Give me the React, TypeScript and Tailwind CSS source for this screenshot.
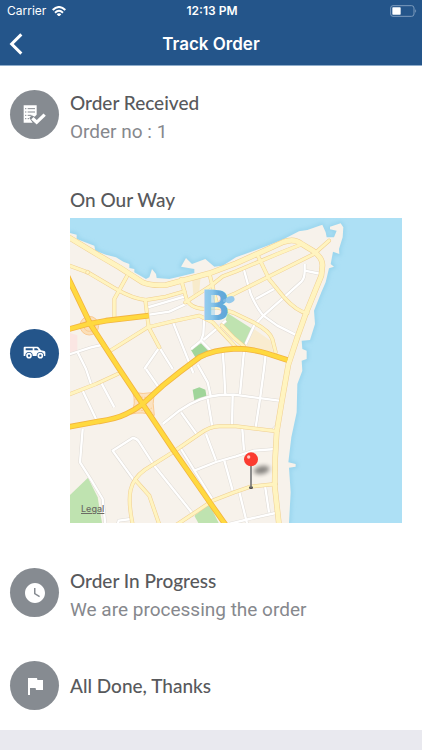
import React from 'react';
import { MdFlag, MdWatchLater } from 'react-icons/md';

const MAJOR_ROADS = [
  'M-12 166 L62 320 L148 453 L218 558 L308 693 L423 858 L470 925',
  'M-5 334 L50 319 L108 308 L236 293',
  'M-5 627 L88 610 Q140 602 168 588 Q195 576 218 558 L278 503 Q330 460 388 418 Q430 395 498 392 Q550 393 590 406 L652 426',
];

const COAST_ROAD =
  'M-5 57 L88 113 L148 148 L218 193 Q245 204 288 201 L418 166 L498 136 L572 103 L640 72 Q672 60 692 76 L730 99 Q760 122 757 145 L754 173 L707 288 L682 358 L655 440 L635 553 L620 643 Q614 720 614 803 L627 920';

const YELLOW_ROADS = [
  'M-5 142 L53 163 L138 213 Q188 242 228 246 L288 236 L343 220',
  'M170 176 L133 243 L133 298',
  'M226 246 L236 328 L268 388',
  'M118 400 L233 328 L308 310 L388 293 L428 313 L498 388',
  'M333 183 L348 238 Q356 270 403 273 L443 268',
  'M346 253 L423 203 L458 175 L498 160 L622 108 L697 78',
  'M418 166 L443 268 L492 285 L550 313 Q600 340 607 363 L617 403',
  'M440 262 Q465 238 492 228 L592 178 L732 108 L777 68',
  'M562 110 L597 183 L642 238 Q680 280 712 286',
  'M455 322 L492 360 L522 385',
  'M-5 530 L78 498 L143 468',
  'M188 920 Q174 850 182 815 Q190 780 225 755 L308 703 L388 648 Q420 625 448 625 L498 625 L622 640',
  'M198 788 L238 833 L268 920',
  'M320 920 L373 885 L428 848 L492 823 L542 806 L617 798',
];

const WHITE_ROADS = [
  'M233 268 L343 236',
  'M238 290 L298 281 L348 258',
  'M308 310 L330 365 L370 465',
  'M268 388 L223 453',
  'M268 388 L308 453',
  'M403 293 L400 348 L393 368 L363 393',
  'M393 368 L428 403',
  'M400 366 L468 308',
  'M-5 410 L63 388 L108 378',
  'M23 403 L48 453 L63 498',
  'M38 518 L78 603',
  'M93 493 L133 568',
  'M278 618 L328 578 Q390 535 450 531 L492 530 L627 548',
  'M228 453 L266 508',
  'M383 440 L413 493 L423 538',
  'M458 400 L462 453 L466 533',
  'M333 583 L383 653',
  'M413 543 L428 633',
  'M488 533 L486 623',
  'M408 648 L438 728',
  'M373 758 L438 732 L498 715 L552 698 L617 693',
  'M463 728 L488 818',
  'M333 693 L433 853',
  'M193 788 L128 698 L188 660 Q198 660 206 670 L253 743 L373 893',
  'M38 633 L30 733 L63 785 L98 843 L106 920',
  'M143 920 L146 908 L183 903',
  'M517 453 L510 528',
  'M587 408 L582 453 L570 543 L557 628',
  'M517 633 L522 698',
  'M607 638 L627 615',
  'M507 818 L532 920',
  'M585 803 L597 883',
  'M480 917 L550 900 L617 885',
  'M522 156 L542 228 Q560 270 580 293 L622 323 L682 353',
  'M557 243 L612 213',
  'M527 378 L552 323 L580 293 L642 238 L695 190 Q704 180 704 160 L704 138',
  'M704 158 L754 168',
  'M522 398 L517 453',
];

const LAND =
  'M0 45 L20 50 L20 63 L73 83 L76 98 L108 110 L138 118 L160 131 L178 138 L178 150 L193 153 L193 163 L228 183 L238 178 L246 153 L258 168 L260 180 L298 183 L333 175 L373 165 L373 153 L333 146 L348 120 L366 138 L406 123 L433 146 L458 143 L498 118 L552 98 L592 83 L642 63 L687 40 L712 36 L757 20 L767 43 L770 58 L792 58 L800 38 L780 34 L780 26 L812 16 L820 28 L818 58 L807 93 L808 108 L789 101 L782 138 L792 146 L777 151 L767 193 L754 223 L732 278 L735 318 L720 366 L695 368 L697 393 L710 398 L710 423 L695 428 L697 458 L682 498 L680 583 L664 658 L655 733 L677 738 L677 746 L657 749 L662 823 L657 915 L0 915 Z';

const MapView: React.FC = () => (
  <div className="relative">
    <svg viewBox="0 0 996 915" className="block w-full" role="img" aria-label="Delivery map">
      <defs>
        <filter id="soft" x="-50%" y="-50%" width="200%" height="200%">
          <feGaussianBlur stdDeviation="6" />
        </filter>
        <linearGradient id="logo" x1="0" x2="1">
          <stop offset="0" stopColor="#9bd0ef" />
          <stop offset="0.4" stopColor="#86c3e9" />
          <stop offset="0.6" stopColor="#66acdc" />
          <stop offset="1" stopColor="#5fa5d8" />
        </linearGradient>
      </defs>
      <rect width="996" height="915" fill="#ade0f5" />
      <path d={LAND} fill="none" stroke="#8fcfe9" strokeWidth="8" filter="url(#soft)" />
      <path d={LAND} fill="#f7f2eb" />

      {/* parks */}
      <g fill="#bfe3b0">
        <path d="M363 396 L393 376 L416 400 L408 418 L376 418 Z" fill="#a0d59a" />
        <path d="M473 286 L547 333 L524 382 L460 328 Z" />
        <path d="M368 515 L388 508 L406 515 L410 538 L373 547 Z" fill="#a0d59a" />
        <path d="M0 831 L54 779 L83 838 L96 915 L0 915 Z" />
        <path d="M373 893 L418 858 L446 915 L385 915 Z" />
      </g>
      <path d="M552 333 L602 368 L609 402 L530 384 Z" fill="#f9ecd0" />
      <path d="M366 180 L392 174 L388 218 L370 230 Z" fill="#f8ebcb" />
      <path d="M0 345 L22 352 L22 400 L0 405 Z" fill="#fbe6e3" />

      {/* road casings first, fills on top */}
      <g fill="none" strokeLinejoin="round">
        <g stroke="#dfdbd6" strokeWidth="10">
          {WHITE_ROADS.map((d) => <path key={d} d={d} />)}
        </g>
        <g stroke="#fff" strokeWidth="7">
          {WHITE_ROADS.map((d) => <path key={d} d={d} />)}
        </g>
        <g stroke="#f0cf91" strokeLinecap="round">
          <path d={COAST_ROAD} strokeWidth="17" />
          {YELLOW_ROADS.map((d) => <path key={d} d={d} strokeWidth="12" />)}
        </g>
        <g stroke="#fff4c0" strokeLinecap="round">
          <path d={COAST_ROAD} strokeWidth="14" />
          {YELLOW_ROADS.map((d) => <path key={d} d={d} strokeWidth="9" />)}
        </g>
        <g stroke="#fbcb92" strokeWidth="3">
          <circle cx="58" cy="323" r="28" fill="#fbdfb8" />
          <circle cx="58" cy="323" r="17" />
          <path d="M188 523 Q218 530 253 523 Q246 556 253 592 Q218 580 183 588 Q200 556 188 523 Z" fill="#fce2c0" />
          <path d="M194 530 L246 584 M246 530 L190 584 M194 545 Q218 530 244 545 M194 570 Q218 585 246 570" strokeDasharray="6 4" />
        </g>
        <g stroke="#f3b540" strokeWidth="17">
          {MAJOR_ROADS.map((d) => <path key={d} d={d} />)}
        </g>
        <g stroke="#ffd93f" strokeWidth="12">
          {MAJOR_ROADS.map((d) => <path key={d} d={d} />)}
        </g>
        <circle cx="53" cy="163" r="6" fill="#fff6c6" stroke="#f0cf91" strokeWidth="2" />
      </g>

      {/* shop marker */}
      <rect x="403" y="213" width="32" height="93" fill="#a9d6ef" opacity="0.6" />
      <text x="395" y="306" fontSize="130" fontWeight="700" fill="url(#logo)" className="font-['Roboto',sans-serif]">
        B
      </text>
      <ellipse cx="480" cy="245" rx="14" ry="10" fill="#94c9ec" transform="rotate(-20 480 245)" />
      <circle cx="464" cy="248" r="5" fill="#7fbbe5" />

      {/* customer pin */}
      <ellipse cx="575" cy="756" rx="24" ry="12" fill="#000" opacity="0.45" transform="rotate(-12 575 756)" filter="url(#soft)" />
      <ellipse cx="543" cy="809" rx="6" ry="4" fill="#444" />
      <path d="M543 740 V809" stroke="#777" strokeWidth="5" />
      <circle cx="543" cy="724" r="21" fill="#fb3b30" />
      <circle cx="536" cy="717" r="5" fill="#ffc9c4" />
    </svg>
    <a href="#legal" className="absolute bottom-2 left-[11px] font-['Inter',sans-serif] text-[9px] leading-3 font-medium text-[#6b6b64] underline">
      Legal
    </a>
  </div>
);

const OrderListIcon: React.FC = () => (
  <svg viewBox="0 0 69 60" className="w-[23px]" aria-hidden="true">
    <path d="M2 1 H41 V29 L35 35 L26 31 L19 39 L29 53 H2 Z" fill="#fff" />
    <path d="M14 11 H36 M14 21 H36 M14 31 H25 M14 41 H18" stroke="#868b91" strokeWidth="3" />
    <path d="M6 11 H10 M6 21 H10 M6 31 H10 M6 41 H10" stroke="#868b91" strokeWidth="3" />
    <path d="M28 40 L41 52 L65 29" fill="none" stroke="#fff" strokeWidth="10" />
  </svg>
);

const VanIcon: React.FC = () => (
  <svg viewBox="0 0 69 40" className="w-[23px]" aria-hidden="true">
    <path d="M5 2 H43 Q46 2 48 5 L54 13 L64 15 Q67 16 67 19 V30 H2 V5 Q2 2 5 2 Z" fill="#fff" />
    <path d="M8 7 H29 V13 H8 Z M34 7 H42 L47 13 H34 Z" fill="#24558a" />
    <circle cx="18" cy="29" r="11" fill="#24558a" />
    <circle cx="52" cy="29" r="11" fill="#24558a" />
    <g fill="none" stroke="#fff" strokeWidth="5">
      <circle cx="18" cy="29" r="6" />
      <circle cx="52" cy="29" r="6" />
    </g>
  </svg>
);

interface StepProps {
  icon: React.ReactNode;
  title: string;
  note?: string;
  active?: boolean;
  className?: string;
  children?: React.ReactNode;
}

const Step: React.FC<StepProps> = ({ icon, title, note, active, className = '', children }) => (
  <li className={`flex gap-[11px] ${note ? 'items-start' : 'items-center'} ${className}`}>
    <div className={`flex size-[49px] shrink-0 items-center justify-center rounded-full text-white ${active ? 'bg-[#24558a]' : 'bg-[#868b91]'}`}>
      {icon}
    </div>
    <div className={`min-w-0 flex-1 ${children ? 'pt-1' : ''}`}>
      <h2 className="font-['Lato',sans-serif] text-[19px] leading-[25px] font-medium text-[#58595c]">{title}</h2>
      {note && <p className="font-['Roboto',sans-serif] text-[19px] leading-[34px] text-[#86888d]">{note}</p>}
      {children && <div className="mt-[6px]">{children}</div>}
    </div>
  </li>
);

const App: React.FC = () => {
  return (
    <div className="min-h-screen bg-[#e9e9ef] font-['Inter',sans-serif]">
      <header className="border-b border-[#8fadcb] bg-[#24558a] text-white">
        {/* Status bar */}
        <div className="grid h-[22px] grid-cols-3 items-center pr-[5px] pl-[7px] text-[12px] leading-4">
          <div className="flex items-center gap-[6px]">
            <span>Carrier</span>
            <svg viewBox="0 0 42 32" className="w-[14px]" fill="none" stroke="#fff" strokeWidth="6" aria-hidden="true">
              <path d="M2 12 Q21 -6 40 12" />
              <path d="M9 20 Q21 9 33 20" />
              <path d="M14 25 Q21 19 28 25 L21 32 Z" fill="#fff" stroke="none" />
            </svg>
          </div>
          <span className="text-center font-semibold">12:13 PM</span>
          <svg viewBox="0 0 81 36" className="w-[27px] justify-self-end" aria-hidden="true">
            <rect x="2" y="2" width="70" height="32" rx="7" fill="none" stroke="#7d9cbd" strokeWidth="3" />
            <rect x="7" y="7" width="25" height="22" rx="2" fill="#fff" />
            <path d="M76 12 Q81 18 76 24 Z" fill="#8ea9c6" />
          </svg>
        </div>
        <div className="grid h-[43px] grid-cols-[40px_1fr_40px] items-center">
          <button type="button" aria-label="Back" className="flex h-full items-center pl-[9px]">
            <svg viewBox="0 0 42 66" className="w-[14px]" aria-hidden="true">
              <path d="M37 4 L8 33 L37 62" fill="none" stroke="#fff" strokeWidth="9" />
            </svg>
          </button>
          <h1 className="text-center text-[17px] leading-6 font-semibold">Track Order</h1>
        </div>
      </header>

      <main className="bg-white pt-6 pr-5 pb-5 pl-[10px]">
        <ol>
          <Step icon={<OrderListIcon />} title="Order Received" note="Order no : 1" />
          <Step icon={<VanIcon />} title="On Our Way" active className="mt-[34px]" >
            <MapView />
          </Step>
          <Step icon={<MdWatchLater className="size-6" />} title="Order In Progress" note="We are processing the order" className="mt-[45px]" />
          <Step icon={<MdFlag className="size-6" />} title="All Done, Thanks" className="mt-[34px]" />
        </ol>
      </main>
    </div>
  );
};

export default App;
